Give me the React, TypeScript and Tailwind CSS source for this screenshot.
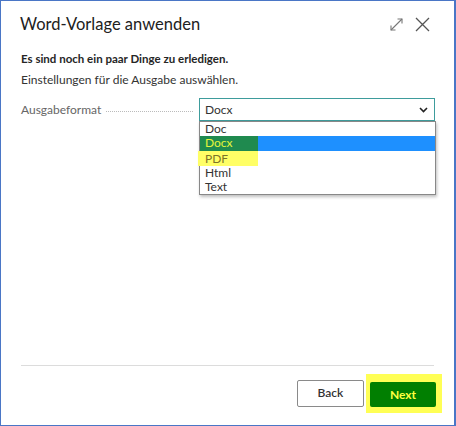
import React from 'react';

const options = ['Doc', 'Docx', 'PDF', 'Html', 'Text'];

export default function App() {
  return (
    <div
      className="w-[456px] h-[426px] bg-white border border-[#4a76c6] border-r-2 flex flex-col text-[#333]"
      style={{ fontFamily: 'Lato, "Open Sans", Arial, sans-serif' }}
    >
      {/* Header */}
      <div className="flex items-center justify-between pl-[19px] pr-[24px] pt-[11px]">
        <h1 className="text-[16.5px] leading-[24px] text-[#212121]">Word-Vorlage anwenden</h1>
        <div className="flex items-center gap-[12px] text-[#666]">
          <svg width="13" height="13" viewBox="0 0 13 13" fill="none" stroke="#777" strokeWidth="1.1">
            <path d="M1 12 L12 1" />
            <path d="M7.5 1 H12 V5.5" />
            <path d="M1 7.5 V12 H5.5" />
          </svg>
          <svg width="15" height="15" viewBox="0 0 15 15" fill="none" stroke="#555" strokeWidth="1.3">
            <path d="M1 1 L14 14 M14 1 L1 14" />
          </svg>
        </div>
      </div>

      {/* Body */}
      <div className="px-[20px] pt-[15px]">
        <p className="text-[11.5px] font-bold text-[#262626] leading-[16px]">Es sind noch ein paar Dinge zu erledigen.</p>
        <p className="text-[12px] text-[#333] leading-[16px] mt-[5px]">Einstellungen für die Ausgabe auswählen.</p>

        <div className="flex items-center mt-[10px] -mr-[1px]">
          <span className="text-[12px] text-[#666] whitespace-nowrap">Ausgabeformat</span>
          <div className="flex-1 ml-[5px] mr-[6px] border-b border-dotted border-[#bbb] mt-[3px]" />
          <div className="relative w-[236px]">
            <div className="h-[23px] border-[1.5px] border-[#3e9c9c] flex items-center justify-between pl-[5px] pr-[6px]">
              <span className="text-[12px] text-[#333]">Docx</span>
              <svg width="9" height="6" viewBox="0 0 9 6" fill="none" stroke="#222" strokeWidth="1.6">
                <path d="M1 1 L4.5 4.5 L8 1" />
              </svg>
            </div>
            {/* Open list */}
            <div className="absolute left-0 top-[23px] w-[237px] bg-white border border-[#888] shadow-[1px_2px_3px_rgba(0,0,0,0.25)]">
              {options.map((o) => {
                if (o === 'Docx') {
                  return (
                    <div key={o} className="h-[14.5px] bg-[#1e90ff] flex">
                      <div className="w-[58px] bg-[#1f8a4f] pl-[5px] text-[12px] leading-[14.5px] text-[#e4f53a]">{o}</div>
                    </div>
                  );
                }
                if (o === 'PDF') {
                  return (
                    <div key={o} className="h-[15px] flex">
                      <div className="w-[60px] -ml-[2px] bg-[#ffff66] pl-[7px] text-[12px] leading-[15px] text-[#7d7428]">{o}</div>
                    </div>
                  );
                }
                return (
                  <div key={o} className="h-[14px] pl-[5px] text-[12px] leading-[14px] text-[#333]">{o}</div>
                );
              })}
            </div>
          </div>
        </div>
      </div>

      <div className="flex-1" />

      {/* Footer */}
      <div className="mx-[20px] border-t border-[#dcdcdc]" />
      <div className="flex justify-end items-center gap-[2px] pr-[12px] pt-[8px] pb-[12px]">
        <button className="w-[67px] h-[27px] border border-[#8a8a8a] rounded-[2px] bg-white text-[12px] font-semibold text-[#333]">
          Back
        </button>
        <div className="bg-[#ffff55] pl-[4px] pr-[6px] pt-[7px] pb-[6px]">
          <button className="w-[66px] h-[25px] rounded-[2px] bg-[#017f01] text-[12px] font-bold text-[#ffff40]">
            Next
          </button>
        </div>
      </div>
    </div>
  );
}
